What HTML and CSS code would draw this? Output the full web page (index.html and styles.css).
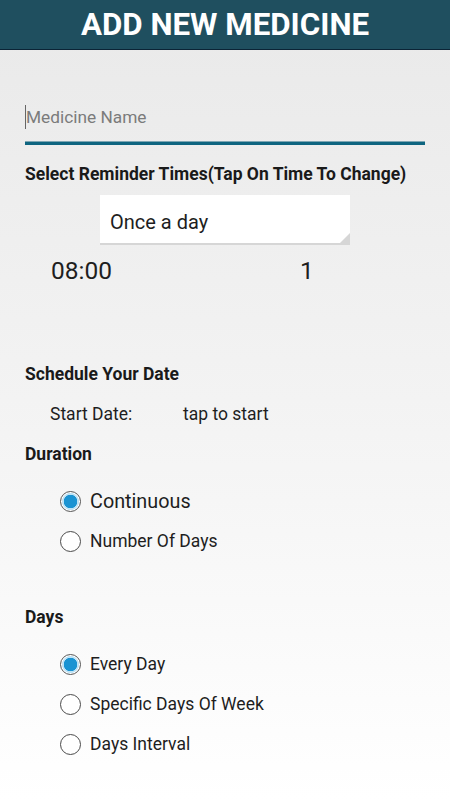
FILE: index.html
```html
<!DOCTYPE html>
<html>
<head>
<meta charset="utf-8">
<link rel="stylesheet" href="styles.css">
</head>
<body>
<header class="appbar"><h1 class="title">ADD NEW MEDICINE</h1></header>
<main class="content">
  <div class="name-field"><span class="cursor"></span><span class="placeholder">Medicine Name</span></div>
  <div class="label first">Select Reminder Times(Tap On Time To Change)</div>
  <div class="spinner"><span class="spinner-text">Once a day</span><span class="corner"></span></div>
  <div class="times"><span class="time">08:00</span><span class="qty">1</span></div>
  <div class="label schedule">Schedule Your Date</div>
  <div class="date-row"><span class="date-label">Start Date:</span><span class="date-value">tap to start</span></div>
  <div class="label duration">Duration</div>
  <div class="radios first-group">
    <div class="radio-row big"><span class="radio checked"></span><span class="radio-label">Continuous</span></div>
    <div class="radio-row"><span class="radio"></span><span class="radio-label">Number Of Days</span></div>
  </div>
  <div class="label days">Days</div>
  <div class="radios">
    <div class="radio-row"><span class="radio checked"></span><span class="radio-label">Every Day</span></div>
    <div class="radio-row"><span class="radio"></span><span class="radio-label">Specific Days Of Week</span></div>
    <div class="radio-row"><span class="radio"></span><span class="radio-label">Days Interval</span></div>
  </div>
</main>
</body>
</html>
```
FILE: styles.css
```css
html, body {
  margin: 0;
  padding: 0;
}
body {
  width: 450px;
  min-height: 800px;
  font-family: Roboto, "Liberation Sans", sans-serif;
  color: #1e1e1e;
  background: linear-gradient(to bottom, #e9e9e9 0%, #f3f3f3 50%, #ffffff 100%);
}
.appbar {
  height: 49px;
  background: #1f4f5f;
  border-bottom: 1px solid #0b2436;
  display: flex;
  align-items: center;
  justify-content: center;
}
.title {
  margin: 0;
  color: #ffffff;
  font-size: 31.3px;
  font-weight: 700;
  line-height: 49px;
}
.content {
  padding: 0 25px;
}
.name-field {
  margin-top: 42px;
  height: 50px;
  display: flex;
  align-items: center;
  border-bottom: 3px solid #0e6580;
  box-shadow: inset 0 -1px 0 #7fa6b3;
}
.cursor {
  width: 1px;
  height: 24px;
  background: #666;
}
.placeholder {
  color: #7b7b7b;
  font-size: 17.3px;
}
.label {
  font-weight: 700;
  font-size: 17.5px;
  line-height: 24px;
  color: #1a1a1a;
}
.label.first { margin-top: 17px; }
.spinner {
  position: relative;
  margin: 9px 0 0 75px;
  width: 250px;
  height: 48px;
  background: #ffffff;
  border-bottom: 2px solid #d6d6d6;
  display: flex;
  align-items: center;
}
.spinner-text {
  padding: 5px 0 0 10px;
  font-size: 20px;
  color: #1e1e1e;
}
.corner {
  position: absolute;
  right: 0;
  bottom: 0;
  width: 0;
  height: 0;
  border-left: 10px solid transparent;
  border-bottom: 10px solid #d6d6d6;
}
.times {
  margin-top: 10px;
  height: 30px;
  display: flex;
  align-items: center;
  font-size: 24.5px;
  color: #1e1e1e;
}
.time { margin-left: 26px; }
.qty { margin-left: 188px; }
.label.schedule { margin-top: 77px; }
.date-row {
  margin-top: 16px;
  height: 24px;
  display: flex;
  align-items: center;
  font-size: 17.5px;
  color: #1e1e1e;
}
.date-label { margin-left: 25px; width: 133px; }
.label.duration { margin-top: 16px; }
.radios { margin-top: 15px; }
.radio-row {
  height: 40px;
  display: flex;
  align-items: center;
  padding-left: 35px;
  font-size: 17.5px;
  color: #1e1e1e;
}
.radio-row.big { font-size: 19.8px; }
.radio {
  box-sizing: border-box;
  width: 21px;
  height: 21px;
  border-radius: 50%;
  border: 1px solid #4a4a4a;
  background: #ffffff;
  margin-right: 9px;
  flex: none;
}
.radio.checked {
  border: 1px solid #555;
  background: radial-gradient(circle, #1a93d2 0, #1a93d2 6.5px, #bfe3f5 7px, #bfe3f5 8.2px, #ffffff 8.8px);
}
.label.days { margin-top: 44px; }
```
